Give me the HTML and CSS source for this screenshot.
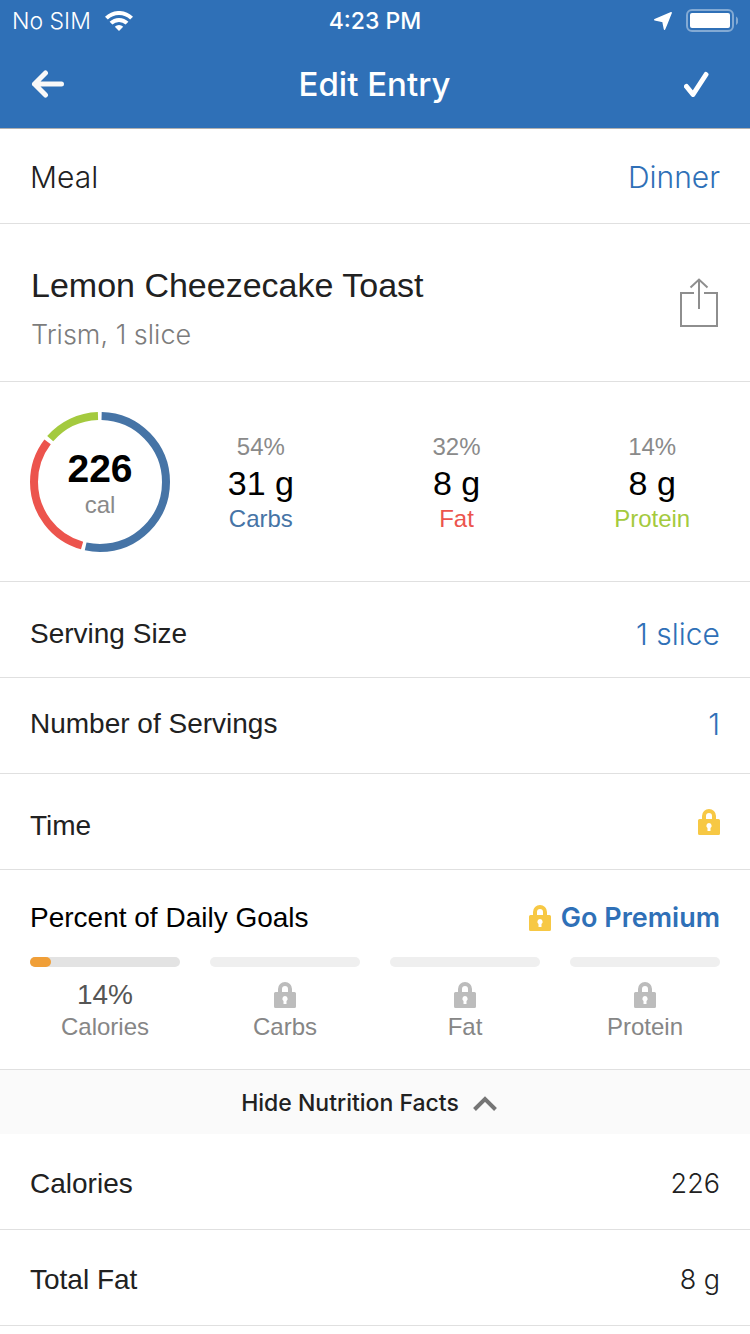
FILE: index.html
```html
<!DOCTYPE html>
<html lang="en">
<head>
    <meta charset="UTF-8">
    <meta name="viewport" content="width=device-width, initial-scale=1.0">
    <title>Edit Entry</title>
    <link rel="stylesheet" href="styles.css">
</head>
<body>
    <!-- shared padlock shape -->
    <svg class="sprite" aria-hidden="true">
        <symbol id="lock" viewBox="0 0 22 26">
            <path fill="none" stroke="currentColor" stroke-width="4" d="M6 12V7a5 5 0 0 1 10 0v5"/>
            <path fill="currentColor" fill-rule="evenodd" d="M1.500 10h19A1.500 1.500 0 0 1 22 11.500v13a1.500 1.500 0 0 1-1.500 1.500h-19A1.500 1.500 0 0 1 0 24.500v-13A1.500 1.500 0 0 1 1.500 10zM11 14a2.700 2.700 0 0 0-1.500 4.900V22h3v-3.100A2.700 2.700 0 0 0 11 14z"/>
        </symbol>
    </svg>

    <header class="header">
        <div class="status">
            <div class="status-side">
                <span>No SIM</span>
                <svg width="28" height="20" viewBox="0 0 28 20" aria-hidden="true">
                    <g fill="none" stroke="#fff" stroke-width="4">
                        <path d="M1.400 7.200a17.800 17.800 0 0 1 25.200 0"/>
                        <path d="M6 12.200a11.300 11.300 0 0 1 16 0"/>
                    </g>
                    <path fill="#fff" d="M14 20l-4.200-4.300a6 6 0 0 1 8.400 0z"/>
                </svg>
            </div>
            <span class="status-time">4:23 PM</span>
            <div class="status-side status-right">
                <svg width="18" height="18" viewBox="0 0 18 18" aria-hidden="true">
                    <path fill="#fff" stroke="#fff" stroke-width="1.500" stroke-linejoin="round" d="M17.200.800C15 6 13 12 10.500 17.200L9 9.600.800 7.700z"/>
                </svg>
                <svg width="52" height="24" viewBox="0 0 52 24" aria-hidden="true">
                    <rect x="1" y="1" width="46" height="21" rx="5" fill="none" stroke="#83aad4" stroke-width="2"/>
                    <rect x="4" y="4" width="40" height="15" rx="2" fill="#fff"/>
                    <path fill="#83aad4" d="M50 7.500c3 1.500 3 7 0 8.500z"/>
                </svg>
            </div>
        </div>
        <div class="navbar">
            <button class="icon-btn" type="button" aria-label="Back">
                <svg width="34" height="28" viewBox="0 0 34 28">
                    <path fill="none" stroke="#f8f8f8" stroke-width="5" stroke-linecap="round" stroke-linejoin="round" d="M14.500 3L3.500 14l11 11M3.500 14h27"/>
                </svg>
            </button>
            <h1>Edit Entry</h1>
            <button class="icon-btn" type="button" aria-label="Save">
                <svg width="25" height="26" viewBox="0 0 25 26">
                    <path fill="none" stroke="#fff" stroke-width="5" stroke-linecap="round" stroke-linejoin="round" d="M2.500 15.500l6.500 8L22 3.500"/>
                </svg>
            </button>
        </div>
    </header>

    <main>
        <div class="row row-meal">
            <span class="light">Meal</span>
            <button class="value" type="button">Dinner</button>
        </div>

        <section class="food">
            <div>
                <h2>Lemon Cheezecake Toast</h2>
                <p>Trism, 1 slice</p>
            </div>
            <button class="icon-btn" type="button" aria-label="Share">
                <svg width="40" height="50" viewBox="0 0 40 50">
                    <g fill="none" stroke="#8e8e8e" stroke-width="2">
                        <path d="M15 15H2v33h36V15H25"/>
                        <path d="M20 31V2M11.500 9.500L20 1.500l8.500 8"/>
                    </g>
                </svg>
            </button>
        </section>

        <section class="macros">
            <div class="ring">
                <svg width="140" height="140" viewBox="0 0 140 140" aria-hidden="true">
                    <g fill="none" stroke-width="8" transform="rotate(-90 70 70)">
                        <circle cx="70" cy="70" r="66" pathLength="1000" stroke="#4674a6" stroke-dasharray="531 469" stroke-dashoffset="-4"/>
                        <circle cx="70" cy="70" r="66" pathLength="1000" stroke="#ec544d" stroke-dasharray="310 690" stroke-dashoffset="-544"/>
                        <circle cx="70" cy="70" r="66" pathLength="1000" stroke="#a4ca3e" stroke-dasharray="131 869" stroke-dashoffset="-864"/>
                    </g>
                </svg>
                <div class="ring-text">
                    <strong>226</strong>
                    <span>cal</span>
                </div>
            </div>
            <div class="macro-list">
                <div class="macro carbs">
                    <span>54%</span>
                    <strong>31 g</strong>
                    <em>Carbs</em>
                </div>
                <div class="macro fat">
                    <span>32%</span>
                    <strong>8 g</strong>
                    <em>Fat</em>
                </div>
                <div class="macro protein">
                    <span>14%</span>
                    <strong>8 g</strong>
                    <em>Protein</em>
                </div>
            </div>
        </section>

        <div class="row row-low">
            <span>Serving Size</span>
            <button class="value" type="button">1 slice</button>
        </div>
        <div class="row row-input">
            <label for="servings">Number of Servings</label>
            <input class="value" id="servings" type="text" inputmode="decimal" value="1">
        </div>
        <div class="row row-low">
            <span>Time</span>
            <button class="icon-btn gold unlock" type="button" aria-label="Unlock time">
                <svg class="lock"><use href="#lock"/></svg>
            </button>
        </div>

        <section class="goals">
            <div class="goals-head">
                <h3>Percent of Daily Goals</h3>
                <a class="premium" href="#">
                    <svg class="lock gold" aria-hidden="true"><use href="#lock"/></svg>
                    Go Premium
                </a>
            </div>
            <div class="goal-list">
                <div class="goal">
                    <div class="bar"><div class="bar-fill" style="width: 14%"></div></div>
                    <div class="goal-value">14%</div>
                    <div class="goal-name">Calories</div>
                </div>
                <div class="goal locked">
                    <div class="bar"></div>
                    <div class="goal-value"><svg class="lock"><use href="#lock"/></svg></div>
                    <div class="goal-name">Carbs</div>
                </div>
                <div class="goal locked">
                    <div class="bar"></div>
                    <div class="goal-value"><svg class="lock"><use href="#lock"/></svg></div>
                    <div class="goal-name">Fat</div>
                </div>
                <div class="goal locked">
                    <div class="bar"></div>
                    <div class="goal-value"><svg class="lock"><use href="#lock"/></svg></div>
                    <div class="goal-name">Protein</div>
                </div>
            </div>
        </section>

        <button class="toggle" type="button" aria-expanded="true" aria-controls="facts">
            Hide Nutrition Facts
            <svg width="24" height="16" viewBox="0 0 24 16" aria-hidden="true">
                <path fill="none" stroke="#757575" stroke-width="4" d="M1.500 14.500L12 4l10.500 10.500"/>
            </svg>
        </button>

        <table class="facts" id="facts">
            <tr>
                <th scope="row">Calories</th>
                <td>226</td>
            </tr>
            <tr>
                <th scope="row">Total Fat</th>
                <td>8 g</td>
            </tr>
        </table>
    </main>
</body>
</html>
```

FILE: styles.css
```css
* {
    margin: 0;
    padding: 0;
    box-sizing: border-box;
}

body {
    font-family: "Liberation Sans", Arial, sans-serif;
    font-size: 28px;
    background: #fff;
    color: #212121;
}

button,
input {
    font: inherit;
    color: inherit;
    background: none;
    border: none;
}

button {
    cursor: pointer;
}

svg {
    display: block;
}

h1, h2, h3, strong, em {
    font-weight: normal;
    font-style: normal;
}

.sprite {
    position: absolute;
    width: 0;
    height: 0;
}

.lock {
    width: 22px;
    height: 26px;
}

.gold {
    color: #f7c844;
}

/* header */
.header {
    background: #2f70b7;
    color: #fff;
}

.status {
    display: flex;
    align-items: center;
    height: 40px;
    padding: 2px 12px 0;
    font-family: Inter, sans-serif;
    font-size: 23px;
}

.status-side {
    flex: 1;
    display: flex;
    align-items: center;
    gap: 14px;
    font-weight: 300;
}

.status-right {
    justify-content: flex-end;
}

.status-time {
    font-weight: 500;
}

.navbar {
    display: flex;
    align-items: center;
    justify-content: space-between;
    height: 88px;
    padding: 0 41px 0 31px;
}

.navbar h1 {
    font-family: Inter, sans-serif;
    font-size: 33px;
    font-weight: 500;
}

/* rows */
.row {
    display: flex;
    align-items: center;
    justify-content: space-between;
    height: 96px;
    padding: 4px 30px 0;
    border-bottom: 1px solid #e0e0e0;
}

.row-meal {
    padding-top: 2px;
    border-top: 1px solid #b0b0b0;
}

.row-low {
    padding-top: 8px;
}

.row-input {
    padding: 0 30px 4px;
}

.light,
.value {
    font-family: Inter, sans-serif;
    font-size: 30px;
    font-weight: 300;
}

.value {
    color: #2f70b7;
    text-align: right;
}

input.value {
    width: 160px;
}

.unlock {
    padding-bottom: 8px;
}

/* food name */
.food {
    display: flex;
    align-items: center;
    justify-content: space-between;
    height: 158px;
    padding: 0 31px;
    border-bottom: 1px solid #e0e0e0;
}

.food h2 {
    padding-top: 12px;
    font-size: 34px;
    line-height: 44px;
}

.food p {
    margin-top: 8px;
    font-family: Inter, sans-serif;
    font-size: 27px;
    font-weight: 300;
    line-height: 40px;
    color: #7c7c7c;
}

/* calories and macros */
.macros {
    display: flex;
    align-items: center;
    height: 200px;
    padding-left: 30px;
    border-bottom: 1px solid #e0e0e0;
}

.ring {
    display: grid;
    place-items: center;
}

.ring svg,
.ring-text {
    grid-area: 1 / 1;
}

.ring-text {
    padding-top: 2px;
    text-align: center;
}

.ring-text strong {
    display: block;
    font-size: 39px;
    font-weight: bold;
    line-height: 44px;
    color: #000;
}

.ring-text span {
    display: block;
    font-size: 24px;
    line-height: 28px;
    color: #8a8a8a;
}

.macro-list {
    flex: 1;
    display: flex;
    padding-top: 2px;
    margin-left: -7px;
}

.macro {
    flex: 1;
    display: flex;
    flex-direction: column;
    text-align: center;
    font-size: 24px;
    line-height: 36px;
}

.macro span {
    color: #8a8a8a;
}

.macro strong {
    font-size: 34px;
    color: #000;
}

.carbs em {
    color: #4674a6;
}

.fat em {
    color: #ec544d;
}

.protein em {
    color: #a4ca3e;
}

/* daily goals */
.goals {
    height: 200px;
    padding: 28px 30px 0;
    border-bottom: 1px solid #e0e0e0;
}

.goals-head {
    display: flex;
    align-items: center;
    justify-content: space-between;
    height: 40px;
}

.goals-head h3 {
    font-size: 28px;
    color: #000;
}

.premium {
    display: flex;
    align-items: center;
    gap: 10px;
    font-family: Inter, sans-serif;
    font-size: 27px;
    font-weight: 600;
    line-height: 32px;
    color: #2f70b7;
    text-decoration: none;
}

.goal-list {
    display: flex;
    gap: 30px;
    margin-top: 19px;
}

.goal {
    flex: 1;
    text-align: center;
}

.bar {
    height: 10px;
    border-radius: 5px;
    background: #e3e3e3;
}

.bar-fill {
    height: 100%;
    border-radius: 5px;
    background: #f09f38;
}

.locked .bar {
    background: #efefef;
}

.goal-value {
    display: flex;
    align-items: center;
    justify-content: center;
    height: 32px;
    margin-top: 12px;
    color: #555;
}

.locked .goal-value {
    color: #bcbcbc;
}

.goal-name {
    font-size: 24px;
    line-height: 32px;
    color: #868686;
}

/* nutrition facts */
.toggle {
    display: flex;
    align-items: center;
    justify-content: center;
    gap: 14px;
    width: 100%;
    height: 64px;
    padding: 2px 12px 0 0;
    background: #fafafa;
    font-family: Inter, sans-serif;
    font-size: 23px;
    font-weight: 500;
}

.facts {
    width: 100%;
    border-spacing: 0;
}

.facts th,
.facts td {
    height: 96px;
    padding: 4px 30px 0;
    border-bottom: 1px solid #e0e0e0;
    text-align: left;
    font-weight: normal;
}

.facts td {
    font-family: Inter, sans-serif;
    font-size: 27px;
    font-weight: 300;
    text-align: right;
}
```
